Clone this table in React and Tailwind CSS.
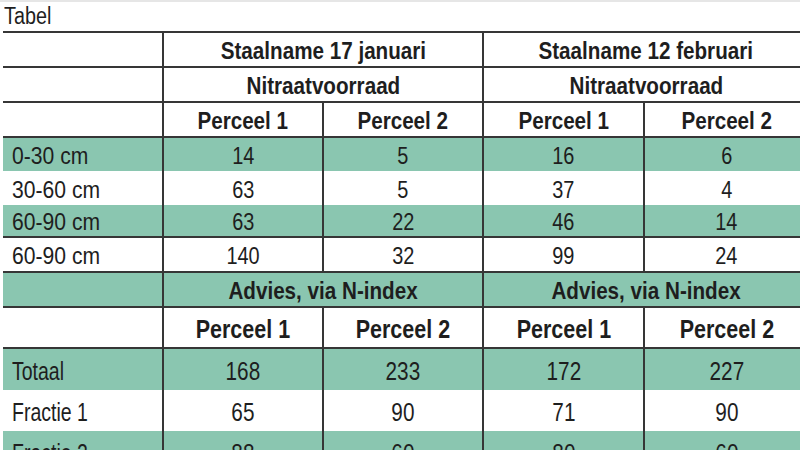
const FONT = { fontFamily: '"Liberation Sans", Arial, sans-serif' };

const GREEN = "bg-[#8ac6b0]";

const SCALE = {
  b: "scale-x-[0.86]",
  n: "scale-x-[0.83]",
  cm: "scale-x-[0.88]",
  w: "scale-x-[0.78]",
};

function Row({ h, top, green, cells, big }) {
  return (
    <div
      className={`grid grid-cols-[159px_160px_160px_161px_165px] ${h} ${top ? "border-t-2 border-[#363636]" : ""} ${green ? GREEN : "bg-white"}`}
    >
      {cells.map((c, i) => (
        <div
          key={i}
          className={`flex items-center ${c.span ? "col-span-2" : ""} ${i === 0 ? "justify-start pl-[9px]" : "justify-center"} ${c.line ? "border-l-2 border-[#363636]" : ""} ${c.bold ? "font-bold" : ""} ${big ? "text-[25px]" : "text-[24px]"} pt-[3px] leading-none text-[#1e1e1e]`}
        >
          {c.t ? (
            <span
              className={`inline-block whitespace-nowrap ${SCALE[c.s || (c.bold ? "b" : "n")]} ${i === 0 ? "origin-left" : "origin-center"}`}
            >
              {c.t}
            </span>
          ) : null}
        </div>
      ))}
    </div>
  );
}

const perceel = [
  { t: "" },
  { t: "Perceel 1", bold: true, line: true },
  { t: "Perceel 2", bold: true, line: true },
  { t: "Perceel 1", bold: true, line: true },
  { t: "Perceel 2", bold: true, line: true },
];

function data(label, s, a, b, c, d) {
  return [
    { t: label, s },
    { t: a, line: true },
    { t: b, line: true },
    { t: c, line: true },
    { t: d, line: true },
  ];
}

export default function App() {
  return (
    <div className="w-[800px] h-[450px] overflow-hidden bg-white" style={FONT}>
      <div className="h-[2px] bg-[#e6e6e6]" />
      <div className="h-[29px] pl-[4px] pt-[3px] text-[23px] leading-none text-[#1e1e1e]">
        <span className="inline-block origin-left scale-x-[0.86]">Tabel</span>
      </div>
      <div className="ml-[3px] w-[805px]">
        <Row
          h="h-[35px]"
          top
          cells={[
            { t: "" },
            { t: "Staalname 17 januari", bold: true, span: true, line: true },
            { t: "Staalname 12 februari", bold: true, span: true, line: true },
          ]}
        />
        <Row
          h="h-[35px]"
          top
          cells={[
            { t: "" },
            { t: "Nitraatvoorraad", bold: true, span: true, line: true },
            { t: "Nitraatvoorraad", bold: true, span: true, line: true },
          ]}
        />
        <Row h="h-[35px]" top cells={perceel} />
        <Row h="h-[35px]" top green cells={data("0-30 cm", "cm", "14", "5", "16", "6")} />
        <Row h="h-[34px]" cells={data("30-60 cm", "cm", "63", "5", "37", "4")} />
        <Row h="h-[31px]" green cells={data("60-90 cm", "cm", "63", "22", "46", "14")} />
        <Row h="h-[35px]" top cells={data("60-90 cm", "cm", "140", "32", "99", "24")} />
        <Row
          h="h-[35px]"
          top
          green
          cells={[
            { t: "" },
            { t: "Advies, via N-index", bold: true, span: true, line: true },
            { t: "Advies, via N-index", bold: true, span: true, line: true },
          ]}
        />
        <Row h="h-[41px]" top cells={perceel} big />
        <Row h="h-[43px]" top green big cells={data("Totaal", "w", "168", "233", "172", "227")} />
        <Row h="h-[41px]" big cells={data("Fractie 1", "w", "65", "90", "71", "90")} />
        <Row h="h-[41px]" green big cells={data("Fractie 2", "w", "88", "60", "80", "60")} />
      </div>
    </div>
  );
}
